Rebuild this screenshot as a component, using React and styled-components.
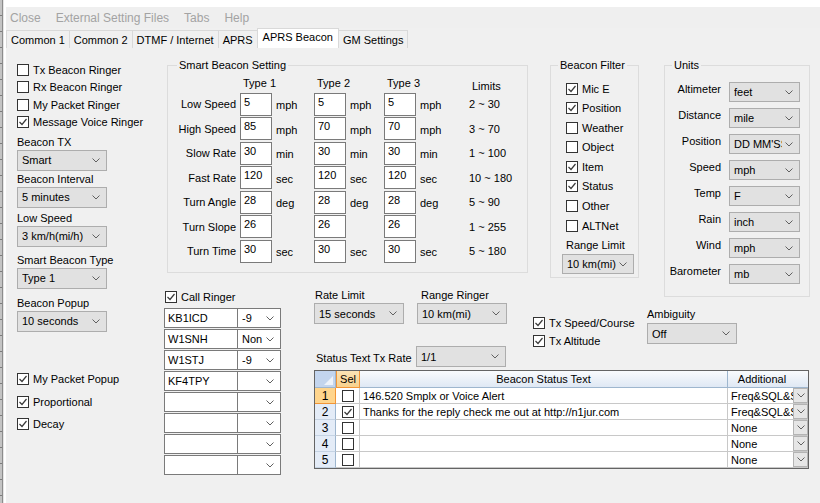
import React from "react";
import styled, { createGlobalStyle } from "styled-components";

const GlobalStyle = createGlobalStyle`
  html, body { margin: 0; padding: 0; background: #f0f0f0; }
  body {
    font-family: "Liberation Sans", Arial, sans-serif;
    font-size: 11px;
    color: #000;
  }
  * { box-sizing: border-box; }
`;

const Chevron = () => (
  <svg width="8" height="5" viewBox="0 0 8 5">
    <polyline points="0.5,0.5 4,4 7.5,0.5" fill="none" stroke="#606060" strokeWidth="1" />
  </svg>
);

const CheckMark = () => (
  <svg width="10" height="10" viewBox="0 0 10 10">
    <polyline points="1.5,5 4,7.5 8.5,2" fill="none" stroke="#3a3a3a" strokeWidth="1.2" />
  </svg>
);

const Check = ({ on }) => <Box>{on && <CheckMark />}</Box>;

const Select = ({ w, h, white, children }) => (
  <SelectBox $w={w} $h={h} $white={white}>
    <SelectText>{children}</SelectText>
    <Chevron />
  </SelectBox>
);

const smartRows = [
  ["Low Speed", "5", "5", "5", "mph", "2 ~ 30"],
  ["High Speed", "85", "70", "70", "mph", "3 ~ 70"],
  ["Slow Rate", "30", "30", "30", "min", "1 ~ 100"],
  ["Fast Rate", "120", "120", "120", "sec", "10 ~ 180"],
  ["Turn Angle", "28", "28", "28", "deg", "5 ~ 90"],
  ["Turn Slope", "26", "26", "26", "", "1 ~ 255"],
  ["Turn Time", "30", "30", "30", "sec", "5 ~ 180"],
];

const filters = [
  ["Mic E", true],
  ["Position", true],
  ["Weather", false],
  ["Object", false],
  ["Item", true],
  ["Status", true],
  ["Other", false],
  ["ALTNet", false],
];

const units = [
  ["Altimeter", "feet"],
  ["Distance", "mile"],
  ["Position", "DD MM'SS"],
  ["Speed", "mph"],
  ["Temp", "F"],
  ["Rain", "inch"],
  ["Wind", "mph"],
  ["Barometer", "mb"],
];

const ringers = [
  ["KB1ICD", "-9"],
  ["W1SNH", "Non"],
  ["W1STJ", "-9"],
  ["KF4TPY", ""],
  ["", ""],
  ["", ""],
  ["", ""],
  ["", ""],
];

const statusRows = [
  [false, "146.520 Smplx or Voice Alert", "Freq&SQL&S"],
  [true, "Thanks for the reply check me out at http://n1jur.com", "Freq&SQL&S"],
  [false, "", "None"],
  [false, "", "None"],
  [false, "", "None"],
];

const tabs = ["Common 1", "Common 2", "DTMF / Internet", "APRS", "APRS Beacon", "GM Settings"];

const App = () => {
  return (
    <Root>
      <GlobalStyle />
      <EdgeStrip />
      <Window>
        <TopStrip />
        <MenuBar>
          <MenuItem>Close</MenuItem>
          <MenuItem>External Setting Files</MenuItem>
          <MenuItem>Tabs</MenuItem>
          <MenuItem>Help</MenuItem>
        </MenuBar>
        <TabStrip>
          {tabs.map((t) => (
            <Tab key={t} $active={t === "APRS Beacon"}>
              {t}
            </Tab>
          ))}
        </TabStrip>
        <Page>
          <LeftCol>
            <CheckList>
              <CheckRow><Check /> Tx Beacon Ringer</CheckRow>
              <CheckRow><Check /> Rx Beacon Ringer</CheckRow>
              <CheckRow><Check /> My Packet Ringer</CheckRow>
              <CheckRow><Check on /> Message Voice Ringer</CheckRow>
            </CheckList>
            <Field $mt={7}>
              <FieldLabel>Beacon TX</FieldLabel>
              <Select w={90}>Smart</Select>
            </Field>
            <Field $mt={2}>
              <FieldLabel>Beacon Interval</FieldLabel>
              <Select w={90}>5 minutes</Select>
            </Field>
            <Field $mt={4}>
              <FieldLabel>Low Speed</FieldLabel>
              <Select w={90}>3 km/h(mi/h)</Select>
            </Field>
            <Field $mt={7}>
              <FieldLabel>Smart Beacon Type</FieldLabel>
              <Select w={90}>Type 1</Select>
            </Field>
            <Field $mt={8}>
              <FieldLabel>Beacon Popup</FieldLabel>
              <Select w={90}>10 seconds</Select>
            </Field>
            <CheckRow $mt={41}><Check on /> My Packet Popup</CheckRow>
            <CheckRow $mt={10}><Check on /> Proportional</CheckRow>
            <CheckRow $mt={9}><Check on /> Decay</CheckRow>
          </LeftCol>

          <RightArea>
            <TopRow>
              <Group $w={361} $pad="0 2px 9px 2px">
                <Caption $ml={7}>Smart Beacon Setting</Caption>
                <SmartGrid>
                  <span />
                  <ColHead $span={2}>Type 1</ColHead>
                  <ColHead $span={2}>Type 2</ColHead>
                  <ColHead $span={2}>Type 3</ColHead>
                  <ColHead $low>Limits</ColHead>
                  {smartRows.map(([label, a, b, c, unit, limit]) => (
                    <React.Fragment key={label}>
                      <RowLabel>{label}</RowLabel>
                      <NumInput>{a}</NumInput>
                      <UnitText>{unit}</UnitText>
                      <NumInput>{b}</NumInput>
                      <UnitText>{unit}</UnitText>
                      <NumInput>{c}</NumInput>
                      <UnitText>{unit}</UnitText>
                      <LimitText>{limit}</LimitText>
                    </React.Fragment>
                  ))}
                </SmartGrid>
              </Group>

              <Group $w={89} $pad="0 4px 3px 11px">
                <Caption $ml={-4}>Beacon Filter</Caption>
                <FilterList>
                  {filters.map(([name, on]) => (
                    <CheckRow key={name} $ml={4}>
                      <Check on={on} />
                      {name}
                    </CheckRow>
                  ))}
                </FilterList>
                <FieldLabel $ml={4} $mt={7}>Range Limit</FieldLabel>
                <Gap2 />
                <Select w={72} h={20}>10 km(mi)</Select>
              </Group>

              <Group $w={146} $pad="0 9px 12px 4px" $ml={3}>
                <Caption $ml={3}>Units</Caption>
                <UnitsGrid>
                  {units.map(([label, value]) => (
                    <React.Fragment key={label}>
                      <UnitLabel>{label}</UnitLabel>
                      <Select w={71} h={20}>{value}</Select>
                    </React.Fragment>
                  ))}
                </UnitsGrid>
              </Group>
            </TopRow>

            <BottomRow>
              <RingerCol>
                <CheckRow $mb={4} $ml={1}><Check on /> Call Ringer</CheckRow>
                {ringers.map(([call, level], i) => (
                  <RingerRow key={i}>
                    <CallInput>{call}</CallInput>
                    <Select w={44} h={20} white>{level}</Select>
                  </RingerRow>
                ))}
              </RingerCol>

              <BottomMain>
                <Controls>
                  <ControlsLeft>
                    <FieldRow>
                      <Field>
                        <FieldLabel $ml={1}>Rate Limit</FieldLabel>
                        <Select w={90}>15 seconds</Select>
                      </Field>
                      <Field>
                        <FieldLabel $ml={4}>Range Ringer</FieldLabel>
                        <Select w={90}>10 km(mi)</Select>
                      </Field>
                    </FieldRow>
                    <InlineField>
                      <InlineLabel>Status Text Tx Rate</InlineLabel>
                      <Select w={90}>1/1</Select>
                    </InlineField>
                  </ControlsLeft>
                  <TxChecks>
                    <CheckRow><Check on /> Tx Speed/Course</CheckRow>
                    <CheckRow><Check on /> Tx Altitude</CheckRow>
                  </TxChecks>
                  <AmbField>
                    <FieldLabel $mb={2}>Ambiguity</FieldLabel>
                    <Select w={90}>Off</Select>
                  </AmbField>
                </Controls>

                <Table>
                  <CornerCell>
                    <svg width="9" height="9" viewBox="0 0 9 9">
                      <polygon points="9,0 9,9 0,9" fill="#eef3fa" />
                    </svg>
                  </CornerCell>
                  <HeadCell $sel>Sel</HeadCell>
                  <HeadCell>Beacon Status Text</HeadCell>
                  <HeadCell $last>Additional</HeadCell>
                  {statusRows.map(([on, text, add], i) => (
                    <React.Fragment key={i}>
                      <RowHead $current={i === 0}>{i + 1}</RowHead>
                      <Cell $center><Check on={on} /></Cell>
                      <Cell>{text}</Cell>
                      <AddCell>
                        <AddText>{add}</AddText>
                        <DropBtn><Chevron /></DropBtn>
                      </AddCell>
                    </React.Fragment>
                  ))}
                </Table>
              </BottomMain>
            </BottomRow>
          </RightArea>
        </Page>
      </Window>
    </Root>
  );
};

export default App;

const Root = styled.div`
  width: 820px;
  height: 503px;
  display: flex;
  overflow: hidden;
  background: #f0f0f0;
`;

const EdgeStrip = styled.div`
  width: 6px;
  flex-shrink: 0;
  background:
    repeating-linear-gradient(to bottom, transparent 0 15px, #7d7d7d 15px 16px) 0 0 / 2px 100% no-repeat,
    linear-gradient(to right, #c4c4c4 0 2px, #8c8c8c 2px 3px, #e6e6e6 3px 4px, #ffffff 4px 6px);
`;

const Window = styled.div`
  flex: 1;
  display: flex;
  flex-direction: column;
  min-width: 0;
`;

const TopStrip = styled.div`
  height: 7px;
  background: #ffffff;
`;

const MenuBar = styled.div`
  height: 21px;
  display: flex;
  align-items: center;
  gap: 15px;
  padding-left: 4px;
  background: #efefef;
`;

const MenuItem = styled.span`
  font-size: 12px;
  color: #a3a3a3;
`;

const TabStrip = styled.div`
  height: 20px;
  display: flex;
  align-items: flex-end;
  background: #f0f0f0;
`;

const Tab = styled.div`
  height: ${(p) => (p.$active ? 20 : 18)}px;
  padding: ${(p) => (p.$active ? "0 5px 3px" : "0 4px 0")};
  margin-left: -1px;
  display: flex;
  align-items: center;
  border: 1px solid #d9d9d9;
  border-bottom: none;
  background: ${(p) => (p.$active ? "#ffffff" : "#f0f0f0")};
  white-space: nowrap;
  &:first-child { margin-left: 0; }
`;

const Page = styled.div`
  flex: 1;
  display: flex;
  padding-left: 11px;
`;

const LeftCol = styled.div`
  width: 147px;
  flex-shrink: 0;
  display: flex;
  flex-direction: column;
  padding-top: 15px;
`;

const CheckList = styled.div`
  display: flex;
  flex-direction: column;
  gap: 4.5px;
`;

const CheckRow = styled.div`
  height: 13px;
  display: flex;
  align-items: center;
  gap: 4px;
  white-space: nowrap;
  margin-top: ${(p) => p.$mt || 0}px;
  margin-bottom: ${(p) => p.$mb || 0}px;
  margin-left: ${(p) => p.$ml || 0}px;
`;

const Box = styled.span`
  width: 12px;
  height: 12px;
  flex-shrink: 0;
  border: 1px solid #333333;
  background: #ffffff;
  display: inline-flex;
  align-items: center;
  justify-content: center;
`;

const Field = styled.div`
  display: flex;
  flex-direction: column;
  gap: 1px;
  margin-top: ${(p) => p.$mt || 0}px;
`;

const FieldLabel = styled.div`
  line-height: 13px;
  white-space: nowrap;
  margin-left: ${(p) => p.$ml || 0}px;
  margin-top: ${(p) => p.$mt || 0}px;
  margin-bottom: ${(p) => p.$mb || 0}px;
`;

const Gap2 = styled.div`
  height: 2px;
`;

const SelectBox = styled.div`
  width: ${(p) => p.$w}px;
  height: ${(p) => p.$h || 21}px;
  flex-shrink: 0;
  display: flex;
  align-items: center;
  gap: 3px;
  padding: 0 6px 0 4px;
  background: ${(p) => (p.$white ? "#ffffff" : "#e1e1e1")};
  border: 1px solid ${(p) => (p.$white ? "#7a7a7a" : "#adadad")};
`;

const SelectText = styled.span`
  flex: 1;
  overflow: hidden;
  white-space: nowrap;
`;

const RightArea = styled.div`
  flex: 1;
  display: flex;
  flex-direction: column;
  padding-top: 17px;
`;

/* the Units box runs a few px past this row, as in the original dialog */
const TopRow = styled.div`
  height: 223px;
  display: flex;
  align-items: flex-start;
  padding-left: 3px;
  gap: 22px;
`;

const Group = styled.div`
  flex-shrink: 0;
  width: ${(p) => p.$w}px;
  margin-left: ${(p) => p.$ml || 0}px;
  border: 1px solid #dcdcdc;
  padding: ${(p) => p.$pad};
  display: flex;
  flex-direction: column;
  align-items: flex-start;
`;

const Caption = styled.div`
  margin: -7px 0 0 ${(p) => p.$ml}px;
  padding: 0 2px;
  line-height: 13px;
  background: #f0f0f0;
  white-space: nowrap;
  & + * { margin-top: 10px; }
`;

const SmartGrid = styled.div`
  && { margin-top: 6px; }
  display: grid;
  grid-template-columns: 70px 32px 42px 32px 38px 32px 53px auto;
  grid-template-rows: 13px repeat(7, 23px);
  row-gap: 1.5px;
  align-items: center;
`;

const ColHead = styled.div`
  grid-column: span ${(p) => p.$span || 1};
  padding-left: 3px;
  line-height: 13px;
  margin-bottom: 1.5px;
  position: relative;
  top: ${(p) => (p.$low ? 3 : 0)}px;
  white-space: nowrap;
`;

const RowLabel = styled.div`
  text-align: right;
  padding-right: 4px;
  white-space: nowrap;
`;

const NumInput = styled.div`
  height: 23px;
  background: #ffffff;
  border: 1px solid #7a7a7a;
  padding: 2px 3px;
  line-height: 13px;
`;

const UnitText = styled.div`
  padding-left: 4px;
  position: relative;
  top: 1px;
`;

const LimitText = styled.div`
  white-space: nowrap;
`;

const FilterList = styled.div`
  display: flex;
  flex-direction: column;
  gap: 6.6px;
`;

const UnitsGrid = styled.div`
  align-self: stretch;
  display: grid;
  grid-template-columns: 1fr 71px;
  column-gap: 8px;
  row-gap: 6px;
  align-items: start;
`;

const UnitLabel = styled.div`
  text-align: right;
  line-height: 13px;
  padding-top: 1px;
  white-space: nowrap;
`;

const BottomRow = styled.div`
  display: flex;
  align-items: flex-start;
`;

const RingerCol = styled.div`
  width: 150px;
  flex-shrink: 0;
  display: flex;
  flex-direction: column;
  padding-top: 2px;
  gap: 1px;
`;

const RingerRow = styled.div`
  display: flex;
  height: 20px;
  & > div:last-child { margin-left: -1px; }
`;

const CallInput = styled.div`
  width: 74px;
  height: 20px;
  background: #ffffff;
  border: 1px solid #7a7a7a;
  padding: 0 3px;
  display: flex;
  align-items: center;
`;

const BottomMain = styled.div`
  display: flex;
  flex-direction: column;
  padding-top: 1px;
`;

const Controls = styled.div`
  display: flex;
  align-items: flex-start;
  height: 81px;
`;

const ControlsLeft = styled.div`
  width: 193px;
  display: flex;
  flex-direction: column;
  gap: 22px;
`;

const FieldRow = styled.div`
  display: flex;
  gap: 13px;
`;

const InlineField = styled.div`
  display: flex;
  align-items: center;
  gap: 4px;
`;

const InlineLabel = styled.div`
  width: 98px;
  padding-left: 2px;
  white-space: nowrap;
  position: relative;
  top: 1px;
`;

const TxChecks = styled.div`
  width: 114px;
  margin-left: 26px;
  padding-top: 27px;
  display: flex;
  flex-direction: column;
  gap: 5px;
`;

const AmbField = styled.div`
  padding-top: 19px;
  display: flex;
  flex-direction: column;
`;

const Table = styled.div`
  width: 495px;
  display: grid;
  grid-template-columns: 21px 24px 368px 80px;
  grid-template-rows: 17px repeat(5, 16px);
  border: 1px solid #646464;
  background: #ffffff;
`;

const CornerCell = styled.div`
  background: #c3d5ee;
  border-right: 1px solid #9eb6ce;
  border-bottom: 1px solid #9eb6ce;
  display: flex;
  align-items: flex-end;
  justify-content: flex-end;
  padding: 0 2px 2px 0;
`;

const HeadCell = styled.div`
  display: flex;
  align-items: center;
  justify-content: center;
  white-space: nowrap;
  overflow: hidden;
  background: ${(p) =>
    p.$sel
      ? "linear-gradient(to bottom, #fbe3b5, #f8d18c)"
      : "linear-gradient(to bottom, #f9fbfd, #dfe8f4)"};
  border-right: 1px solid ${(p) => (p.$sel ? "#f29536" : "#9eb6ce")};
  border-bottom: 1px solid ${(p) => (p.$sel ? "#f29536" : "#9eb6ce")};
  border-left: ${(p) => (p.$sel ? "1px solid #f29536" : "none")};
  ${(p) => p.$last && "border-right: none; padding-right: 12px;"}
`;

const RowHead = styled.div`
  display: flex;
  align-items: center;
  justify-content: center;
  font-size: 12px;
  background: ${(p) => (p.$current ? "#ffd58d" : "#e4ecf7")};
  border-right: 1px solid ${(p) => (p.$current ? "#f29536" : "#9eb6ce")};
  border-bottom: 1px solid ${(p) => (p.$current ? "#f29536" : "#c5d3e3")};
`;

const Cell = styled.div`
  display: flex;
  align-items: center;
  justify-content: ${(p) => (p.$center ? "center" : "flex-start")};
  padding-left: ${(p) => (p.$center ? 0 : 3)}px;
  white-space: nowrap;
  overflow: hidden;
  border-right: 1px solid #c8c8c8;
  border-bottom: 1px solid #c8c8c8;
`;

const AddCell = styled.div`
  display: flex;
  align-items: center;
  border-bottom: 1px solid #c8c8c8;
  overflow: hidden;
`;

const AddText = styled.span`
  flex: 1;
  padding-left: 3px;
  white-space: nowrap;
  overflow: hidden;
`;

const DropBtn = styled.span`
  width: 15px;
  height: 15px;
  flex-shrink: 0;
  display: flex;
  align-items: center;
  justify-content: center;
  background: #e6e6e6;
  border: 1px solid #b4b4b4;
`;
